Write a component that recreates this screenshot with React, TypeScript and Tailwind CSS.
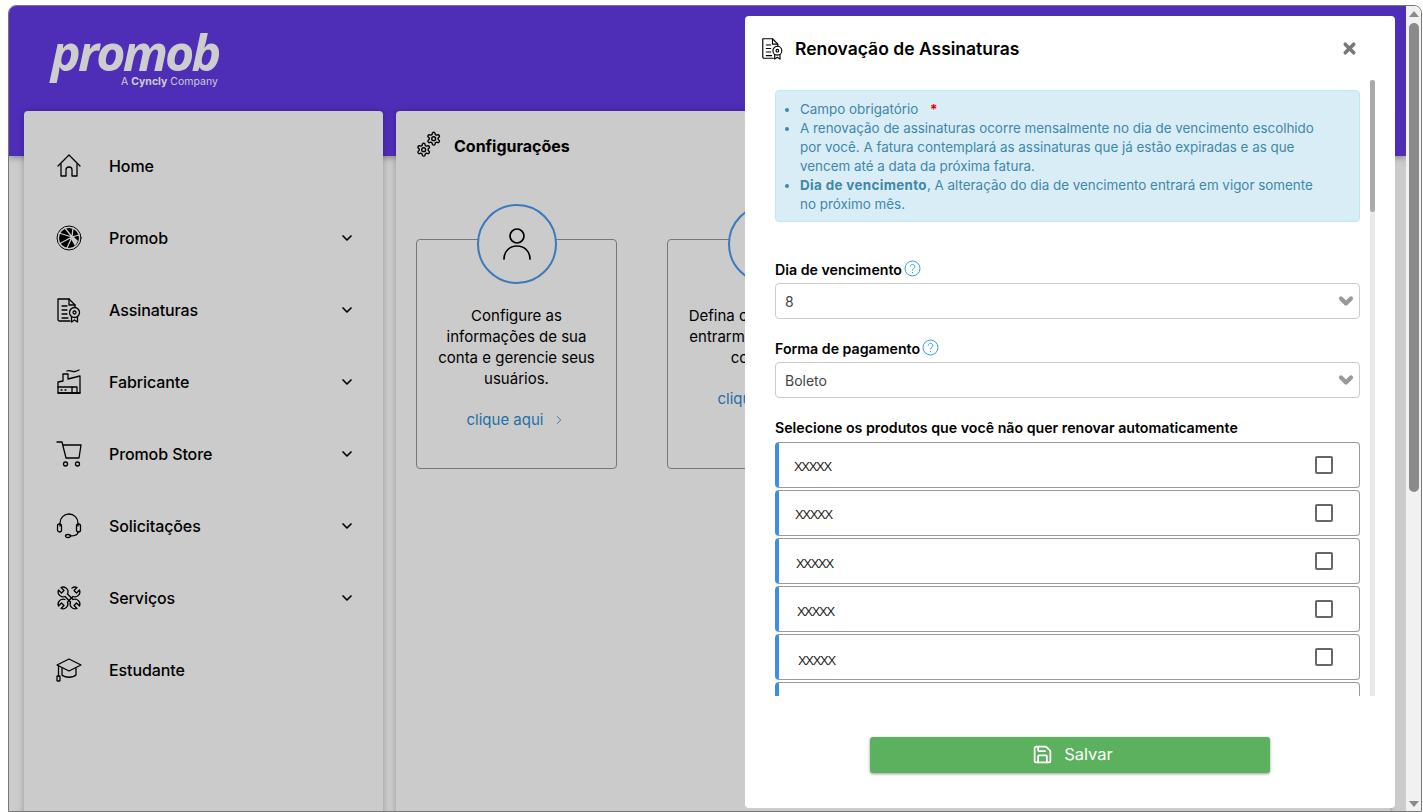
import { ChevronDown, ChevronRight, Save, X } from 'lucide-react';
import type { ReactNode } from 'react';

const FONT = "font-['Inter','Liberation_Sans',sans-serif]";

const GEAR = 'M12.22 2h-.44a2 2 0 0 0-2 2v.18a2 2 0 0 1-1 1.73l-.43.25a2 2 0 0 1-2 0l-.15-.08a2 2 0 0 0-2.73.73l-.22.38a2 2 0 0 0 .73 2.73l.15.1a2 2 0 0 1 1 1.72v.51a2 2 0 0 1-1 1.74l-.15.09a2 2 0 0 0-.73 2.73l.22.38a2 2 0 0 0 2.73.73l.15-.08a2 2 0 0 1 2 0l.43.25a2 2 0 0 1 1 1.73V20a2 2 0 0 0 2 2h.44a2 2 0 0 0 2-2v-.18a2 2 0 0 1 1-1.73l.43-.25a2 2 0 0 1 2 0l.15.08a2 2 0 0 0 2.73-.73l.22-.39a2 2 0 0 0-.73-2.73l-.15-.08a2 2 0 0 1-1-1.74v-.5a2 2 0 0 1 1-1.74l.15-.09a2 2 0 0 0 .73-2.73l-.22-.38a2 2 0 0 0-2.73-.73l-.15.08a2 2 0 0 1-2 0l-.43-.25a2 2 0 0 1-1-1.73V4a2 2 0 0 0-2-2z';

function Icon({ size = 26, children }: { size?: number; children: ReactNode }) {
  return (
    <svg width={size} height={size} viewBox="0 0 26 26" fill="none" stroke="#000" strokeWidth="1.3" strokeLinecap="round" strokeLinejoin="round">
      {children}
    </svg>
  );
}

const HomeIcon = () => (
  <Icon>
    <path d="M2 13 13 2l11 11" />
    <path d="M5 11v12h5v-6a3 3 0 0 1 6 0v6h5V11" />
  </Icon>
);

const PromobIcon = () => (
  <Icon>
    <circle cx="13" cy="13" r="12" strokeWidth="1" />
    <circle cx="13" cy="13" r="10" fill="#000" stroke="none" />
    <path d="M16 12 3 8M16 12 9 3M16 12l1-9M16 12 3 19M16 12l-5 11M16 12l7-2" stroke="#cbcbcb" strokeWidth="1.3" />
    <path d="m17 11 5 5-3 5-4-7" fill="#cbcbcb" stroke="none" />
  </Icon>
);

const CertIcon = ({ size = 26 }: { size?: number }) => (
  <Icon size={size}>
    <path d="M14 24H3.5A1.5 1.5 0 0 1 2 22.5V2h11l6 6v2" />
    <path d="M13 2v6h6M6 9h5M6 13h5M6 17h5M6 21h6" />
    <circle cx="18.5" cy="15.5" r="5" />
    <circle cx="18.5" cy="15.5" r="1.5" />
    <path d="M15.5 20V25l3-2 3 2v-5" />
  </Icon>
);

const FactoryIcon = () => (
  <Icon>
    <path d="M2 24V13l5-1V5h5v5l12-3v17z" />
    <path d="M2 24h22M2 18h14" />
    <path d="M5 21h1M9 21h1M16 24v-6h5v6" />
    <path d="M11 2c3-1.500 5 1 8 .5 2-.3 3-1 4-1.500" />
  </Icon>
);

const CartIcon = () => (
  <Icon>
    <path d="M1 1h5l4 16h13l2-13H7" />
    <circle cx="9.500" cy="23" r="2" />
    <circle cx="21.500" cy="23" r="2" />
  </Icon>
);

const HeadsetIcon = () => (
  <Icon>
    <path d="M4 13V10a9 9 0 0 1 18 0v3" />
    <rect x="1.500" y="11" width="4" height="8" rx="2" />
    <rect x="20.500" y="11" width="4" height="8" rx="2" />
    <path d="M22 19c0 3-3 4-8 4" />
    <ellipse cx="12" cy="23" rx="2.500" ry="1.500" />
  </Icon>
);

const ToolsIcon = () => (
  <Icon>
    <path d="M10 3a5 5 0 0 0-5-.5l3 3-2.500 2.500-3-3A5 5 0 0 0 9 11.500l5.500 5.500a5 5 0 0 0 6.500 6.500l-3-3 2.500-2.500 3 3A5 5 0 0 0 17 14.500L11.500 9A5 5 0 0 0 10 3z" />
    <path d="M16 3a5 5 0 0 1 5-.5l-3 3 2.500 2.500 3-3A5 5 0 0 1 17 11.500L11.500 17A5 5 0 0 1 5 23.500l3-3L5.500 18l-3 3A5 5 0 0 1 9 14.500" />
  </Icon>
);

const CapIcon = () => (
  <Icon>
    <path d="M1 8 13 2l12 6-12 6z" />
    <path d="M6 11v7c3 3 11 3 14 0v-7" />
    <path d="M2.500 9v10" />
    <rect x="1" y="19" width="3" height="5" rx=".5" />
  </Icon>
);

const GearsIcon = () => (
  <svg width="26" height="27" viewBox="0 0 26 27" fill="none" stroke="#000" strokeWidth="2.200" strokeLinecap="round" strokeLinejoin="round">
    <g transform="translate(0 11) scale(.64)">
      <path d={GEAR} />
      <circle cx="12" cy="12" r="3" />
    </g>
    <g transform="translate(10 0) scale(.64)">
      <path d={GEAR} />
      <circle cx="12" cy="12" r="3" />
    </g>
  </svg>
);

const UserIcon = () => (
  <svg width="28" height="32" viewBox="0 0 28 32" fill="none" stroke="#000" strokeWidth="1.700" strokeLinecap="round">
    <circle cx="14" cy="8" r="7" />
    <path d="M1 31c0-8 6-13 13-13s13 5 13 13" />
  </svg>
);

const HelpIcon = () => (
  <svg className="mb-[3px]" width="17" height="17" viewBox="0 0 17 17" fill="none" stroke="#2b9fe0" strokeWidth="1">
    <circle cx="8.500" cy="8.500" r="7.500" />
    <path d="M6.200 6.600a2.300 2.300 0 1 1 3.500 2c-.9.500-1.200 1-1.200 2" />
    <path d="M8.500 12v1.200" />
  </svg>
);

const MENU = [
  { label: 'Home', icon: <HomeIcon /> },
  { label: 'Promob', icon: <PromobIcon />, more: true },
  { label: 'Assinaturas', icon: <CertIcon />, more: true },
  { label: 'Fabricante', icon: <FactoryIcon />, more: true },
  { label: 'Promob Store', icon: <CartIcon />, more: true },
  { label: 'Solicitações', icon: <HeadsetIcon />, more: true },
  { label: 'Serviços', icon: <ToolsIcon />, more: true },
  { label: 'Estudante', icon: <CapIcon /> },
];

const ROWS = [
  { pad: 'pl-[15px]', top: 'pt-[3px]' },
  { pad: 'pl-[16px]', top: 'pt-[3px]' },
  { pad: 'pl-[17px]', top: 'pt-[6px]' },
  { pad: 'pl-[18px]', top: 'pt-[6px]' },
  { pad: 'pl-[19px]', top: 'pt-[7px]' },
];

function Sidebar() {
  return (
    <aside className="w-[359px] shrink-0 rounded-t-[4px] bg-[#cbcbcb] pt-[19px] shadow-[0_0_6px_rgba(0,0,0,0.25)]">
      {MENU.map(item => (
        <div key={item.label} className="flex h-[72px] items-center pl-[32px] pr-[28px]">
          <span className="flex w-[53px] shrink-0">{item.icon}</span>
          <span className="flex-1 text-[16px] font-medium tracking-[-0.1px] text-black">{item.label}</span>
          {item.more && <ChevronDown className="h-[16px] w-[16px] text-black" strokeWidth={2.500} />}
        </div>
      ))}
    </aside>
  );
}

function ConfigCard({ icon, children }: { icon?: ReactNode; children: ReactNode }) {
  return (
    <div className="relative h-[230px] w-[201px] shrink-0 rounded-[4px] border border-[#777] text-center">
      <div className="absolute left-[60px] top-[-36px] flex h-[80px] w-[80px] items-center justify-center rounded-full border-2 border-[#3b79bd] bg-[#cbcbcb]">
        {icon}
      </div>
      <div className="whitespace-nowrap pt-[65px] text-[15px] leading-[21px] text-black">{children}</div>
      <div className="mt-[20px] flex items-center justify-center gap-[9px] text-[15px] leading-[21px] text-[#1f6fa8]">
        clique aqui <ChevronRight className="h-[14px] w-[14px]" strokeWidth={1.500} />
      </div>
    </div>
  );
}

function Field({ label, value }: { label: string; value: string }) {
  return (
    <div className="mt-[20px]">
      <div className="mb-[3px] flex h-[20px] items-center gap-[2px] text-[14.200px] font-semibold text-black">
        <span>{label}</span> <HelpIcon />
      </div>
      <div className="flex h-[36px] items-center justify-between rounded-[4px] border border-[#ccc] pl-[9px] pr-[3px] text-[14px] text-[#444]">
        <span>{value}</span>
        <ChevronDown className="h-[20px] w-[20px] text-[#999]" strokeWidth={5} />
      </div>
    </div>
  );
}

function Modal() {
  return (
    <div className="absolute left-[736px] top-[10px] flex h-[792px] w-[650px] flex-col rounded-[4px] bg-white">
      <div className="flex h-[64px] shrink-0 items-center pl-[16px] pr-[37px]">
        <CertIcon size={23} />
        <h2 className="ml-[11px] flex-1 pt-[2px] text-[17.500px] font-semibold text-black">Renovação de Assinaturas</h2>
        <X className="h-[17px] w-[17px] text-[#777]" strokeWidth={5} />
      </div>
      <div className="relative h-[616px] shrink-0 overflow-hidden pl-[30px] pr-[35px] pt-[10px]">
        <div className="absolute right-[20px] top-0 h-full w-[5px] bg-[#e8e8e8]">
          <div className="h-[132px] rounded-full bg-[#aaa]" />
        </div>
        <div className="mb-[38px] h-[132px] rounded-[4px] border border-[#bce8f1] bg-[#d9edf7] pl-[10px] pt-[9px] text-[13.400px] leading-[19px] text-[#3f87a8]">
          <ul className="list-disc whitespace-nowrap pl-[14px]">
            <li>Campo obrigatório <span className="ml-[8px] font-bold text-red-600">*</span></li>
            <li>A renovação de assinaturas ocorre mensalmente no dia de vencimento escolhido<br />por você. A fatura contemplará as assinaturas que já estão expiradas e as que<br />vencem até a data da próxima fatura.</li>
            <li><strong className="tracking-[0.35px]">Dia de vencimento</strong>, A alteração do dia de vencimento entrará em vigor somente<br />no próximo mês.</li>
          </ul>
        </div>
        <Field label="Dia de vencimento" value="8" />
        <Field label="Forma de pagamento" value="Boleto" />
        <div className="mb-[4px] mt-[20px] flex h-[20px] items-center text-[14.200px] font-semibold text-black">
          Selecione os produtos que você não quer renovar automaticamente
        </div>
        <div className="flex flex-col gap-[2px]">
          {ROWS.map(row => (
            <div key={row.pad} className={`flex h-[46px] items-center justify-between rounded-[4px] border border-[#999] border-l-4 border-l-[#3b8fe8] pr-[26px] ${row.pad}`}>
              <span className={`font-['Liberation_Sans',sans-serif] text-[13px] tracking-[-1.300px] text-[#222] ${row.top}`}>XXXXX</span>
              <span className="h-[18px] w-[18px] rounded-[2px] border-2 border-[#666]" />
            </div>
          ))}
          <div className="h-[46px] rounded-[4px] border border-[#999] border-l-4 border-l-[#3b8fe8]" />
        </div>
      </div>
      <div className="flex justify-center pt-[41px]">
        <button className="flex h-[36px] w-[400px] items-center justify-center gap-[11px] rounded-[3px] bg-[#5bb15d] pb-[2px] pl-[5px] text-[16.500px] text-white shadow-[0_1px_3px_rgba(0,0,0,0.4)]">
          <Save className="h-[21px] w-[21px]" strokeWidth={2} /> Salvar
        </button>
      </div>
    </div>
  );
}

export default function App() {
  return (
    <div className={`h-[812px] w-[1423px] overflow-hidden bg-white pl-[8px] pt-[5px] ${FONT}`}>
      <div className="flex h-[807px] w-[1414px] overflow-hidden rounded-t-[8px] border border-[#777]">
        <div className="relative flex-1 overflow-hidden bg-[#cbcbcb]">
          <header className="h-[150px] bg-[#4e2eb7] pl-[42px] pt-[23px] text-[#cdcdcd] shadow-[0_2px_6px_rgba(0,0,0,0.3)]">
            <div className="font-['Open_Sans',sans-serif] text-[50px] font-bold italic leading-[46px] tracking-[-2.800px]">promob</div>
            <div className="ml-[70px] text-[10.500px] leading-[13px]">A <b>Cyncly</b> Company</div>
          </header>
          <div className="relative mt-[-45px] flex gap-[13px] pl-[15px]">
            <Sidebar />
            <main className="h-[720px] w-[994px] shrink-0 rounded-t-[4px] bg-[#cbcbcb] pl-[20px] pt-[20px] shadow-[0_0_6px_rgba(0,0,0,0.25)]">
              <div className="flex items-center gap-[12px]">
                <GearsIcon />
                <h1 className="pt-[3px] text-[16px] font-bold leading-[20px] text-black">Configurações</h1>
              </div>
              <div className="mt-[81px] flex gap-[50px]">
                <ConfigCard icon={<UserIcon />}>
                  Configure as<br />informações de sua<br />conta e gerencie seus<br />usuários.
                </ConfigCard>
                <ConfigCard>
                  Defina os dias em que<br />entrarmos em contato<br />com você.
                </ConfigCard>
              </div>
            </main>
          </div>
          <Modal />
        </div>
        <div className="flex w-[15px] shrink-0 flex-col items-center bg-[#f1f1f1] pt-[5px]">
          <span className="h-0 w-0 border-x-[5px] border-b-[6px] border-x-transparent border-b-[#8a8a8a]" />
          <span className="mt-[6px] h-[469px] w-[10px] rounded-full bg-[#8a8a8a]" />
          <span className="mt-auto mb-[4px] h-0 w-0 border-x-[5px] border-t-[6px] border-x-transparent border-t-[#8a8a8a]" />
        </div>
      </div>
    </div>
  );
}
